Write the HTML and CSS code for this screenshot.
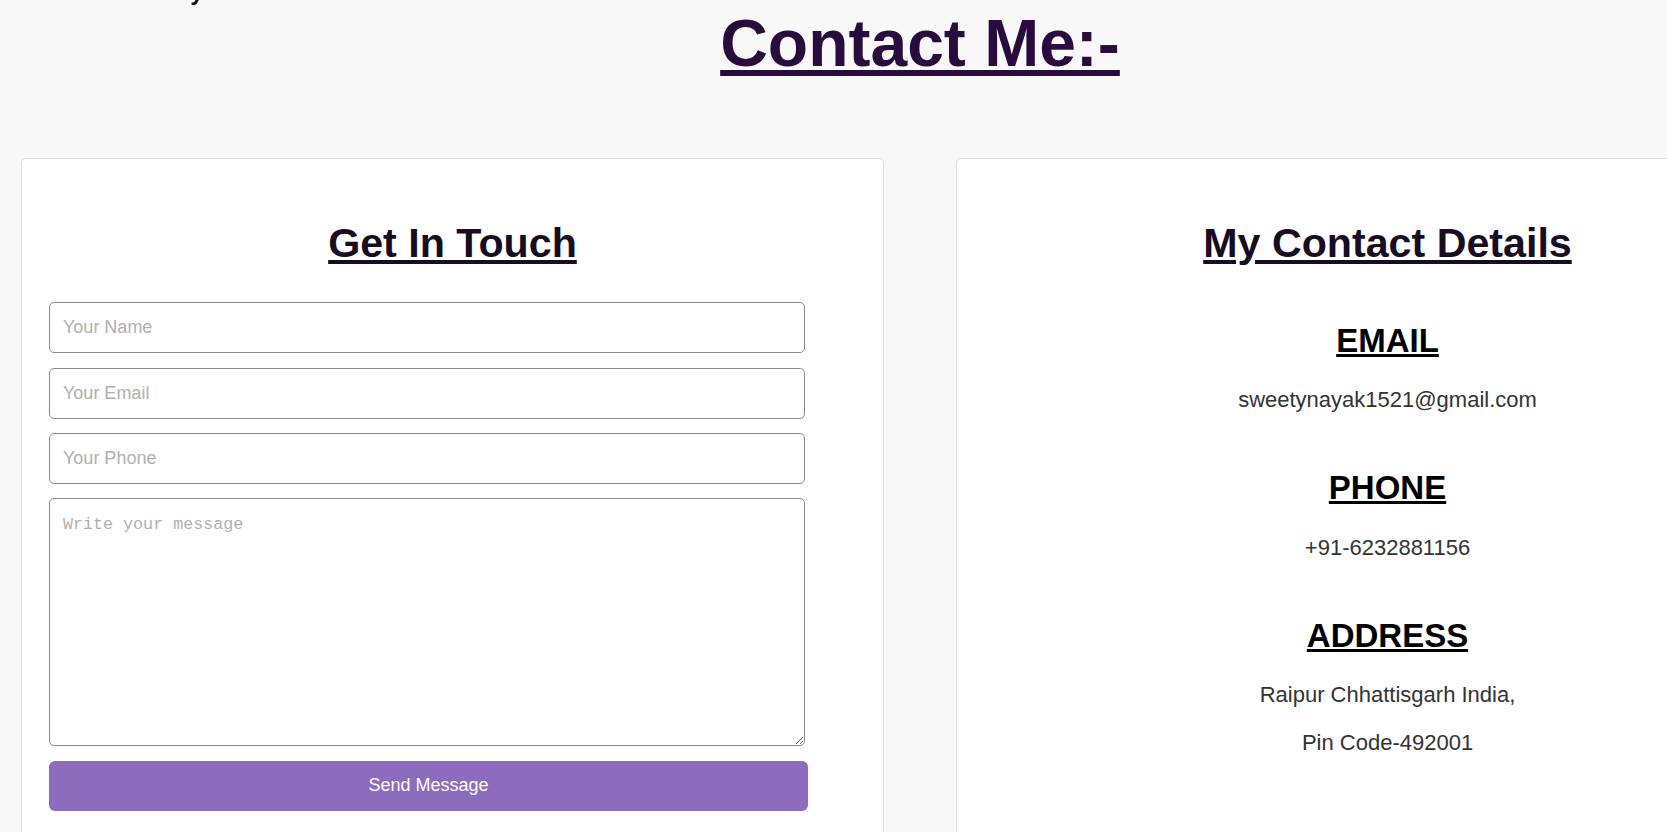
FILE: index.html
```html
<!DOCTYPE html>
<html lang="en">
<head>
<meta charset="utf-8">
<title>Contact Me</title>
<link rel="stylesheet" href="styles.css">
</head>
<body>
<div class="page">
  <p class="prev-line">Thank you</p>
  <h1 class="page-title">Contact Me:-</h1>
  <section class="cards">
    <div class="card form-card">
      <h2 class="card-title">Get In Touch</h2>
      <form class="contact-form">
        <input class="field" type="text" placeholder="Your Name">
        <input class="field" type="email" placeholder="Your Email">
        <input class="field" type="tel" placeholder="Your Phone">
        <textarea class="field message" placeholder="Write your message"></textarea>
        <button class="send-btn" type="button">Send Message</button>
      </form>
    </div>
    <div class="card details-card">
      <h2 class="card-title">My Contact Details</h2>
      <h3 class="detail-title first">EMAIL</h3>
      <p class="detail-text">sweetynayak1521@gmail.com</p>
      <h3 class="detail-title">PHONE</h3>
      <p class="detail-text">+91-6232881156</p>
      <h3 class="detail-title">ADDRESS</h3>
      <p class="detail-text">Raipur Chhattisgarh India,</p>
      <p class="detail-text">Pin Code-492001</p>
    </div>
  </section>
</div>
</body>
</html>
```
FILE: styles.css
```css
html, body {
  margin: 0;
  padding: 0;
  background: #f8f8f8;
  overflow: hidden;
}

body {
  font-family: "Liberation Sans", Arial, sans-serif;
  color: #333;
}

.page {
  width: 1840px;
}

.prev-line {
  margin: -20px 0 0;
  padding-left: 113px;
  font-size: 24px;
  line-height: 24px;
  font-weight: bold;
  color: #170c22;
}

.page-title {
  margin: 1px 0 0;
  font-size: 66px;
  line-height: normal;
  font-weight: bold;
  text-align: center;
  color: #2a0b3d;
  text-decoration: underline;
}

.cards {
  display: flex;
  gap: 72px;
  padding: 0 21px;
  margin-top: 77px;
}

.card {
  box-sizing: border-box;
  width: 863px;
  flex: none;
  background: #fff;
  border: 1px solid #dddddd;
  border-radius: 5px;
  padding: 61.2px 27px 60px;
}

.card-title {
  margin: 0;
  font-size: 41.2px;
  line-height: 46px;
  font-weight: bold;
  text-align: center;
  color: #170c22;
  text-decoration: underline;
}

.contact-form {
  width: 759px;
  margin-top: 36px;
  display: flex;
  flex-direction: column;
  align-items: flex-start;
}

.field {
  box-sizing: border-box;
  width: 756px;
  height: 51px;
  margin: 0 0 14.33px;
  padding: 0 13px;
  border: 1px solid #8a8a8a;
  border-radius: 5px;
  background: #fff;
  font-family: "Liberation Sans", Arial, sans-serif;
  font-size: 18px;
  color: #333;
  outline: none;
}

.field::placeholder {
  color: #b0b0b0;
}

.message {
  height: 248px;
  padding: 16px 13px;
  font-family: "Liberation Mono", "DejaVu Sans Mono", monospace;
  font-size: 16.7px;
  resize: vertical;
}

.send-btn {
  box-sizing: border-box;
  width: 759px;
  height: 50px;
  margin-top: 0.2px;
  border: none;
  border-radius: 6px;
  background: #8e6cbd;
  color: #fff;
  font-family: "Liberation Sans", Arial, sans-serif;
  font-size: 18px;
  cursor: pointer;
}

.details-card {
  text-align: center;
}

.detail-title {
  margin: 57px 0 28.5px;
  font-size: 33px;
  line-height: 37px;
  font-weight: bold;
  color: #000;
  text-decoration: underline;
}

.detail-title.first {
  margin-top: 55.7px;
}

.detail-text {
  margin: 0;
  font-size: 22px;
  line-height: 25px;
  color: #333;
}

.detail-text + .detail-text {
  margin-top: 22.7px;
}
```
